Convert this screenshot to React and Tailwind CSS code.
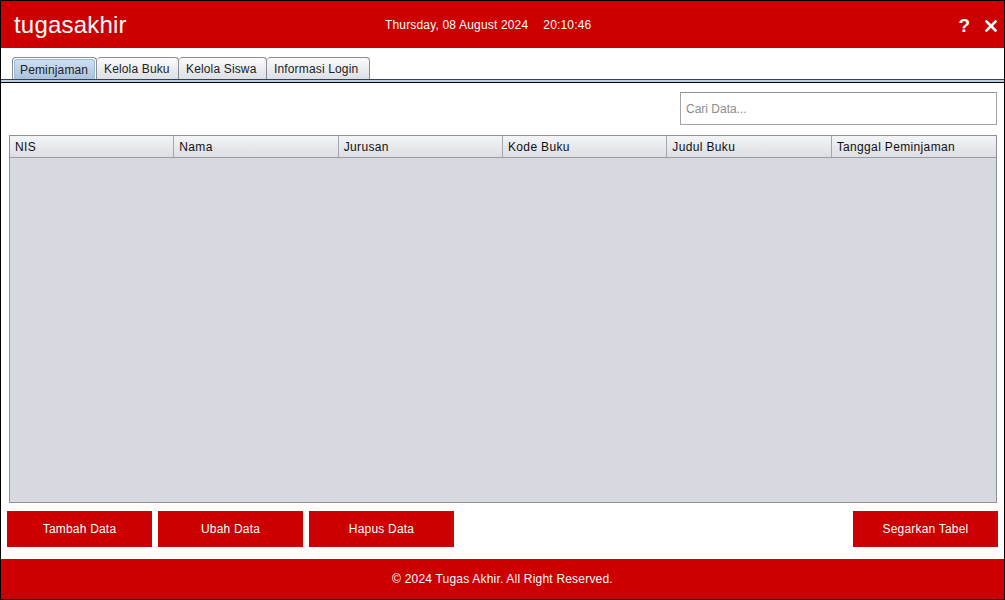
import React from "react";

const tabs = [
  { label: "Peminjaman", w: "w-[85px]", active: true },
  { label: "Kelola Buku", w: "w-[82px]" },
  { label: "Kelola Siswa", w: "w-[88px]" },
  { label: "Informasi Login", w: "w-[103px]" },
];

const cols = ["NIS", "Nama", "Jurusan", "Kode Buku", "Judul Buku", "Tanggal Peminjaman"];

function Btn({ children }) {
  return (
    <div className="w-[145px] h-[36px] bg-[#cc0000] text-white text-[12px] tracking-[0.2px] flex items-center justify-center">
      {children}
    </div>
  );
}

export default function App() {
  return (
    <div
      className="w-[1005px] h-[600px] border border-black bg-white flex flex-col overflow-hidden"
      style={{ fontFamily: '"Liberation Sans", Arial, sans-serif' }}
    >
      {/* header */}
      <div className="h-[47px] shrink-0 bg-[#cc0000] text-white flex items-center relative">
        <div className="ml-[13px] text-[24px] tracking-[0.2px] leading-none mt-[1px]">tugasakhir</div>
        <div className="absolute left-[384px] top-[17px] text-[12px] tracking-[0.17px] leading-[14px] flex">
          <span>Thursday, 08 August 2024</span>
          <span className="ml-[15px]">20:10:46</span>
        </div>
        <div className="ml-auto mr-[7px] flex items-center gap-[15px] font-bold text-[19px] leading-none mt-[2px]">
          <span>?</span>
          <svg width="12" height="12" viewBox="0 0 12 12">
            <path d="M1.5 1.5 L10.5 10.5 M10.5 1.5 L1.5 10.5" stroke="white" strokeWidth="2.6" strokeLinecap="square" />
          </svg>
        </div>
      </div>

      {/* tabs */}
      <div className="shrink-0 pt-[9px] pl-[11px] flex items-end h-[31px]">
        {tabs.map((t) =>
          t.active ? (
            <div
              key={t.label}
              className={`${t.w} h-[22px] rounded-t-[4px] border border-b-0 border-[#8a8d91] p-[1px] pb-0`}
            >
              <div className="h-full rounded-t-[3px] border border-b-0 border-[#9cbad9] bg-gradient-to-b from-[#cfdff0] to-[#a9c3de] flex items-center pl-[5px] text-[12px] tracking-[0.15px] text-[#222]">
                {t.label}
              </div>
            </div>
          ) : (
            <div
              key={t.label}
              className={`${t.w} h-[22px] rounded-t-[4px] border border-b-0 border-l-0 border-[#8a8d91] bg-gradient-to-b from-[#fbfbfc] to-[#dcdfe4] flex items-center pl-[7px] text-[12px] tracking-[0.15px] text-[#222]`}
            >
              {t.label}
            </div>
          )
        )}
      </div>
      <div className="shrink-0 h-[1px] bg-[#3a3f48]" />
      <div className="shrink-0 h-[2px] bg-[#b8cfe5]" />
      <div className="shrink-0 h-[1px] bg-black" />

      {/* search */}
      <div className="shrink-0 flex justify-end pr-[7px] mt-[9px]">
        <div className="w-[317px] h-[33px] border border-[#a3a3a3] border-t-[#8f8f8f] flex items-center pl-[5px] text-[12px] text-[#8c8c8c]">
          Cari Data...
        </div>
      </div>

      {/* table */}
      <div className="shrink-0 ml-[8px] mr-[7px] mt-[10px] h-[368px] border border-[#8e9196] bg-[#d6d9e0] flex flex-col">
        <div className="h-[22px] grid grid-cols-6 bg-gradient-to-b from-[#f4f5f7] to-[#dcdee3] border-b border-[#9a9da2]">
          {cols.map((c, i) => (
            <div
              key={c}
              className={`flex items-center pl-[5px] pt-[1px] text-[12px] tracking-[0.35px] text-[#111] ${i < 5 ? "border-r border-[#a4a7ac]" : ""}`}
            >
              {c}
            </div>
          ))}
        </div>
      </div>

      {/* buttons */}
      <div className="shrink-0 flex mt-[8px] pl-[6px] pr-[6px] gap-[6px]">
        <Btn>Tambah Data</Btn>
        <Btn>Ubah Data</Btn>
        <Btn>Hapus Data</Btn>
        <div className="flex-1" />
        <Btn>Segarkan Tabel</Btn>
      </div>

      {/* footer */}
      <div className="mt-auto shrink-0 h-[40px] bg-[#cc0000] text-white text-[12px] tracking-[0.2px] flex items-center justify-center">
        © 2024 Tugas Akhir. All Right Reserved.
      </div>
    </div>
  );
}
